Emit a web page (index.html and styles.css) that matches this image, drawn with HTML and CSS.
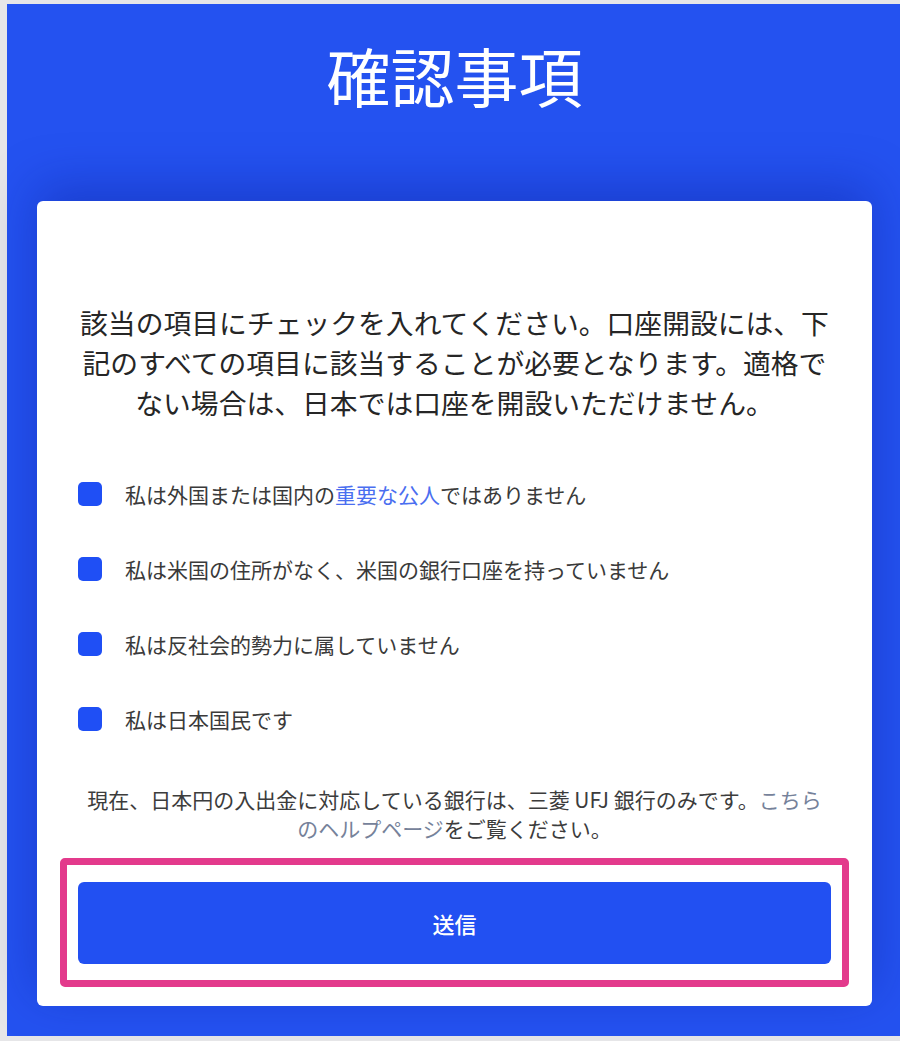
FILE: index.html
```html
<!DOCTYPE html>
<html lang="ja">
<head>
  <meta charset="UTF-8">
  <meta name="viewport" content="width=device-width, initial-scale=1.0">
  <title>確認事項</title>
  <link rel="stylesheet" href="styles.css">
</head>
<body>

  <div class="screen">
    <h1 class="title">確認事項</h1>

    <div class="card">
      <p class="intro">該当の項目にチェックを入れてください。口座開設には、下記のすべての項目に該当することが必要となります。適格でない場合は、日本では口座を開設いただけません。</p>

      <ul class="checks">
        <li><span class="box"></span>私は外国または国内の<a href="#" class="link">重要な公人</a>ではありません</li>
        <li><span class="box"></span>私は米国の住所がなく、米国の銀行口座を持っていません</li>
        <li><span class="box"></span>私は反社会的勢力に属していません</li>
        <li><span class="box"></span>私は日本国民です</li>
      </ul>

      <p class="note">現在、日本円の入出金に対応している銀行は、三菱 UFJ 銀行のみです。<a href="#" class="help">こちらのヘルプページ</a>をご覧ください。</p>

      <div class="highlight">
        <button class="submit">送信</button>
      </div>
    </div>
  </div>

</body>
</html>
```

FILE: styles.css
```css
body {
  margin: 0;
  padding: 4px 0 4px 7px;
  background: #e6e6e8;
  font-family: "Noto Sans CJK JP", "Noto Sans", sans-serif;
}

.screen {
  background: #2452f0;
  padding: 32px 28px 30px 30px;
}

.title {
  margin: 0 0 88px;
  text-align: center;
  font-size: 64px;
  line-height: 77px;
  font-weight: 400;
  color: #ffffff;
}

.card {
  background: #ffffff;
  border-radius: 6px;
  padding: 101px 41px 19px;
  box-shadow: 0 -14px 50px rgba(8, 24, 140, 0.35);
}

.intro {
  margin: 0;
  text-align: center;
  font-size: 27.8px;
  line-height: 40px;
  color: #262626;
}

.checks {
  list-style: none;
  margin: 58px 0 0;
  padding: 0;
  display: flex;
  flex-direction: column;
  gap: 47px;
}

.checks li {
  display: flex;
  align-items: center;
  height: 28px;
  font-size: 21px;
  color: #3a3a3a;
}

.box {
  width: 24px;
  height: 24px;
  border-radius: 5px;
  background: #1f4ff5;
  margin-right: 23px;
  flex-shrink: 0;
}

.link {
  color: #4a6ef0;
  text-decoration: none;
}

.note {
  width: 745px;
  margin: 52px auto 0;
  text-align: center;
  font-size: 21px;
  line-height: 29px;
  color: #3c3c3c;
}

.help {
  color: #76829a;
  text-decoration: none;
}

.highlight {
  margin: 15px -18px 0;
  border: 7px solid #e33a8c;
  border-radius: 5px;
  padding: 17px 11px 16px;
}

.submit {
  display: block;
  width: 100%;
  height: 82px;
  border: none;
  border-radius: 6px;
  background: #2250f2;
  color: #ffffff;
  font-family: inherit;
  font-size: 22px;
  font-weight: 500;
  cursor: pointer;
}
```
